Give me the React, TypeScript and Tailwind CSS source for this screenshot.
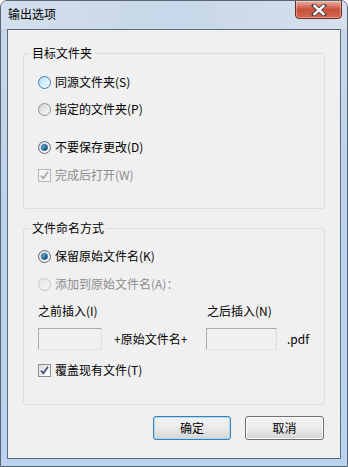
import React from "react";

const font = { fontFamily: '"Noto Sans CJK SC", "Noto Sans", sans-serif' };

function Radio({ state }: { state: "hover" | "off" | "on" | "disabled" }) {
  if (state === "on") {
    return (
      <span className="flex h-[13px] w-[13px] shrink-0 items-center justify-center rounded-full border border-[#5b6d7c] bg-gradient-to-br from-[#d4d9de] to-[#f7f7f7]">
        <span className="h-[7px] w-[7px] rounded-full border border-[#1c4e75] bg-gradient-to-br from-[#8ad1f8] via-[#2f7fb8] to-[#15496e]" />
      </span>
    );
  }
  if (state === "hover") {
    return (
      <span className="h-[13px] w-[13px] shrink-0 rounded-full border border-[#3c7fb1] bg-gradient-to-br from-[#a9dbf6] via-[#d7effc] to-[#f2f9fe]" />
    );
  }
  if (state === "disabled") {
    return (
      <span className="h-[13px] w-[13px] shrink-0 rounded-full border border-[#c5c5c5] bg-gradient-to-br from-[#e6e6e6] to-[#f6f6f6]" />
    );
  }
  return (
    <span className="h-[13px] w-[13px] shrink-0 rounded-full border border-[#8e8f8f] bg-gradient-to-br from-[#cbcbcb] via-[#e8e8e8] to-[#fbfbfb]" />
  );
}

function Check({ disabled }: { disabled?: boolean }) {
  return (
    <span
      className={
        "flex h-[13px] w-[13px] shrink-0 items-center justify-center border " +
        (disabled
          ? "border-[#b5b5b5] bg-[#f4f4f4]"
          : "border-[#8e8f8f] bg-gradient-to-br from-[#dcdcdc] to-[#ffffff]")
      }
    >
      <svg width="11" height="11" viewBox="0 0 11 11">
        <path
          d="M2 5.5 L4.3 8.3 L9 1.8"
          fill="none"
          stroke={disabled ? "#a8a8a8" : "#3c4f7c"}
          strokeWidth="1.7"
        />
      </svg>
    </span>
  );
}

function Row({
  children,
  label,
  muted,
}: {
  children: React.ReactNode;
  label: string;
  muted?: boolean;
}) {
  return (
    <div className="flex h-[16px] items-center gap-[4px]">
      {children}
      <span className={muted ? "text-[#8d8d8d]" : "text-black"}>{label}</span>
    </div>
  );
}

function Group({
  title,
  children,
  className,
}: {
  title: string;
  children: React.ReactNode;
  className?: string;
}) {
  return (
    <fieldset
      className={
        "ml-[15px] w-[302px] rounded-[3px] border border-[#d5dfe5] pl-[14px] " +
        (className ?? "")
      }
    >
      <legend className="-ml-[8px] px-[2px] leading-[16px] text-black">
        {title}
      </legend>
      {children}
    </fieldset>
  );
}

export default function App() {
  return (
    <div
      className="flex h-[467px] w-[348px] flex-col overflow-hidden rounded-t-[7px] border border-[#5a6572] bg-gradient-to-b from-[#c8d8ea] via-[#bcd3ee] to-[#b9d3f0] text-[12px]"
      style={font}
    >
      {/* title bar */}
      <div className="flex h-[28px] shrink-0 items-start justify-between bg-gradient-to-r from-[#d3dfec] via-[#c7d7e9] to-[#d6e0ec]">
        <span className="mt-[5px] ml-[7px] text-[12px] leading-[16px] text-black">
          输出选项
        </span>
        <div className="mr-[5px] -mt-[1px] flex h-[19px] w-[47px] items-center justify-center rounded-b-[4px] border border-[#6c2a22] bg-gradient-to-b from-[#eab1a3] via-[#c9503a] to-[#d2694f] shadow-[inset_0_0_0_1px_rgba(255,255,255,0.35)]">
          <svg width="16" height="12" viewBox="0 0 16 12">
            <path
              d="M3 1.5 L13 10.5 M13 1.5 L3 10.5"
              stroke="#4a3a3a"
              strokeWidth="4.2"
              strokeLinecap="square"
            />
            <path
              d="M3.5 2 L12.5 10 M12.5 2 L3.5 10"
              stroke="#ffffff"
              strokeWidth="2.4"
              strokeLinecap="square"
            />
          </svg>
        </div>
      </div>

      {/* client area */}
      <div className="mx-[6px] flex h-[430px] shrink-0 flex-col border border-[#5c6b7c] bg-[#f0f0f0]">
        <Group title="目标文件夹" className="mt-[15px] pb-[25px]">
          <div className="mt-[13px] flex flex-col">
            <Row label="同源文件夹(S)">
              <Radio state="hover" />
            </Row>
            <div className="mt-[11px]">
              <Row label="指定的文件夹(P)">
                <Radio state="off" />
              </Row>
            </div>
            <div className="mt-[22px]">
              <Row label="不要保存更改(D)">
                <Radio state="on" />
              </Row>
            </div>
            <div className="mt-[12px]">
              <Row label="完成后打开(W)" muted>
                <Check disabled />
              </Row>
            </div>
          </div>
        </Group>

        <Group title="文件命名方式" className="mt-[11px] pb-[26px]">
          <div className="mt-[12px] flex flex-col">
            <Row label="保留原始文件名(K)">
              <Radio state="on" />
            </Row>
            <div className="mt-[12px]">
              <Row label="添加到原始文件名(A)：" muted>
                <Radio state="disabled" />
              </Row>
            </div>
            <div className="mt-[11px] flex h-[16px] items-center">
              <span className="w-[169px]">之前插入(I)</span>
              <span>之后插入(N)</span>
            </div>
            <div className="mt-[9px] flex h-[22px] items-center">
              <div className="h-[22px] w-[64px] border border-[#a9a9a9] border-r-[#dcdcdc] border-b-[#e3e3e3] bg-[#f0f0f0]" />
              <span className="ml-[12px] w-[92px]">+原始文件名+</span>
              <div className="h-[22px] w-[71px] border border-[#a9a9a9] border-r-[#dcdcdc] border-b-[#e3e3e3] bg-[#f0f0f0]" />
              <span className="ml-[10px]">.pdf</span>
            </div>
            <div className="mt-[12px]">
              <Row label="覆盖现有文件(T)">
                <Check />
              </Row>
            </div>
          </div>
        </Group>

        <div className="mt-[11px] mr-[16px] flex justify-end gap-[14px]">
          <button className="h-[24px] w-[78px] rounded-[3px] border border-[#3c7fb1] bg-gradient-to-b from-[#f2f2f2] via-[#ebebeb] to-[#d4d4d4] text-black shadow-[inset_0_0_0_1px_#a6dcf7]">
            确定
          </button>
          <button className="h-[24px] w-[79px] rounded-[3px] border border-[#707070] bg-gradient-to-b from-[#f2f2f2] via-[#ebebeb] to-[#d4d4d4] text-black shadow-[inset_0_0_0_1px_#fcfcfc]">
            取消
          </button>
        </div>
      </div>
    </div>
  );
}
